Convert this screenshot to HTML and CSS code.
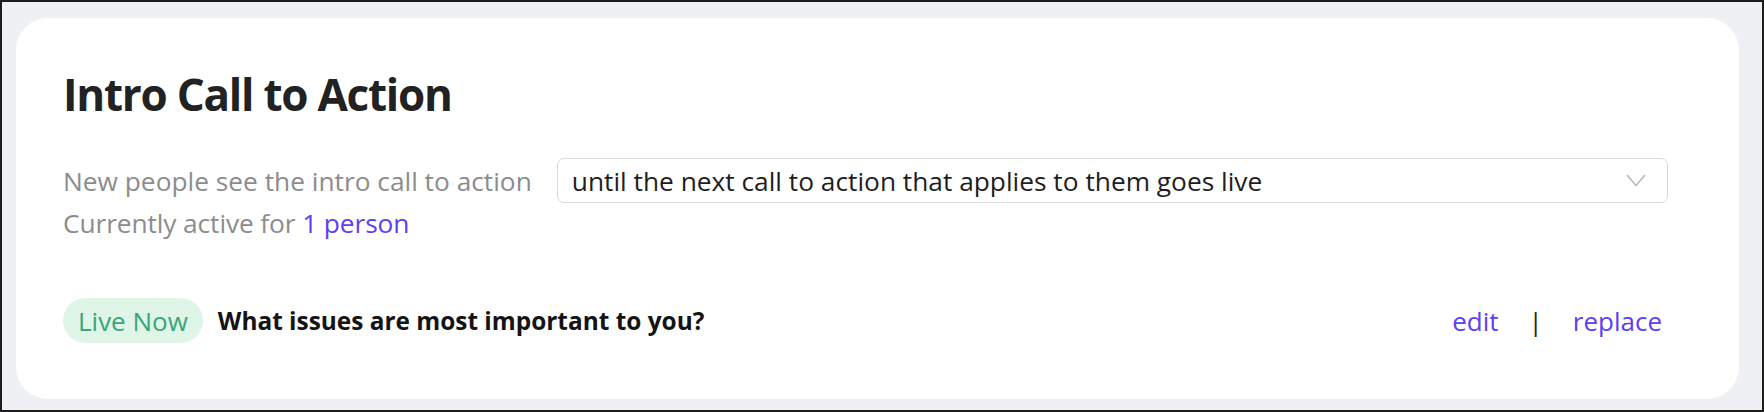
FILE: index.html
```html
<!DOCTYPE html>
<html lang="en">
<head>
<meta charset="utf-8">
<title>Intro Call to Action</title>
<link rel="stylesheet" href="styles.css">
</head>
<body>
<div class="frame">
  <section class="card">
    <h1 class="title">Intro Call to Action</h1>
    <div class="cta-row">
      <span class="label">New people see the intro call to action</span>
      <div class="select">
        <span class="select-value">until the next call to action that applies to them goes live</span>
        <svg class="chevron" width="20" height="13" viewBox="0 0 20 13"><polyline points="1,1 10,11.5 19,1" fill="none" stroke="#b9b9b9" stroke-width="1.5"/></svg>
      </div>
    </div>
    <div class="status">Currently active for <a class="link" href="#">1 person</a></div>
    <div class="live-row">
      <span class="badge">Live Now</span>
      <span class="question">What issues are most important to you?</span>
      <div class="actions">
        <a class="link" href="#">edit</a>
        <span class="sep">|</span>
        <a class="link" href="#">replace</a>
      </div>
    </div>
  </section>
</div>
</body>
</html>
```
FILE: styles.css
```css
* { box-sizing: border-box; }
html, body { margin: 0; padding: 0; }
body {
  font-family: "Open Sans", "Noto Sans", sans-serif;
  color: #222;
}
.frame {
  width: 1764px;
  height: 412px;
  border: 2px solid #1c1c1c;
  background: #eff0f3;
  padding: 16px 23px 11px 14px;
}
.card {
  height: 100%;
  background: #fff;
  border-radius: 32px;
  padding: 48px 71px 0 47px;
}
.title {
  margin: 0;
  font-size: 44px;
  line-height: 56px;
  font-weight: 700;
  color: #222;
  letter-spacing: -1.25px;
}
.cta-row {
  margin-top: 36px;
  display: flex;
  align-items: center;
  gap: 25px;
}
.label {
  font-size: 26.3px;
  line-height: 34px;
  color: #8c8c8c;
  white-space: nowrap;
}
.select {
  flex: 1;
  height: 45px;
  border: 1.5px solid #dadada;
  border-radius: 7px;
  display: flex;
  align-items: center;
  padding: 0 21px 0 14px;
}
.select-value {
  flex: 1;
  font-size: 26.3px;
  line-height: 34px;
  color: #1e1e1e;
}
.chevron { display: block; }
.status {
  margin-top: 3px;
  font-size: 26.3px;
  line-height: 34px;
  color: #8c8c8c;
  letter-spacing: -0.1px;
}
.link {
  color: #5b3ff5;
  text-decoration: none;
}
.live-row {
  margin-top: 58px;
  display: flex;
  align-items: center;
}
.badge {
  height: 45px;
  display: flex;
  align-items: center;
  padding: 0 15px;
  border-radius: 23px;
  background: #def5e7;
  color: #3aa676;
  font-size: 26px;
}
.question {
  margin-left: 15px;
  font-size: 24.4px;
  line-height: 30px;
  font-weight: 700;
  color: #141414;
}
.actions {
  margin-left: auto;
  display: flex;
  align-items: center;
  gap: 30px;
  padding-right: 6px;
  font-size: 26px;
  line-height: 34px;
}
.sep { color: #222; }
```
